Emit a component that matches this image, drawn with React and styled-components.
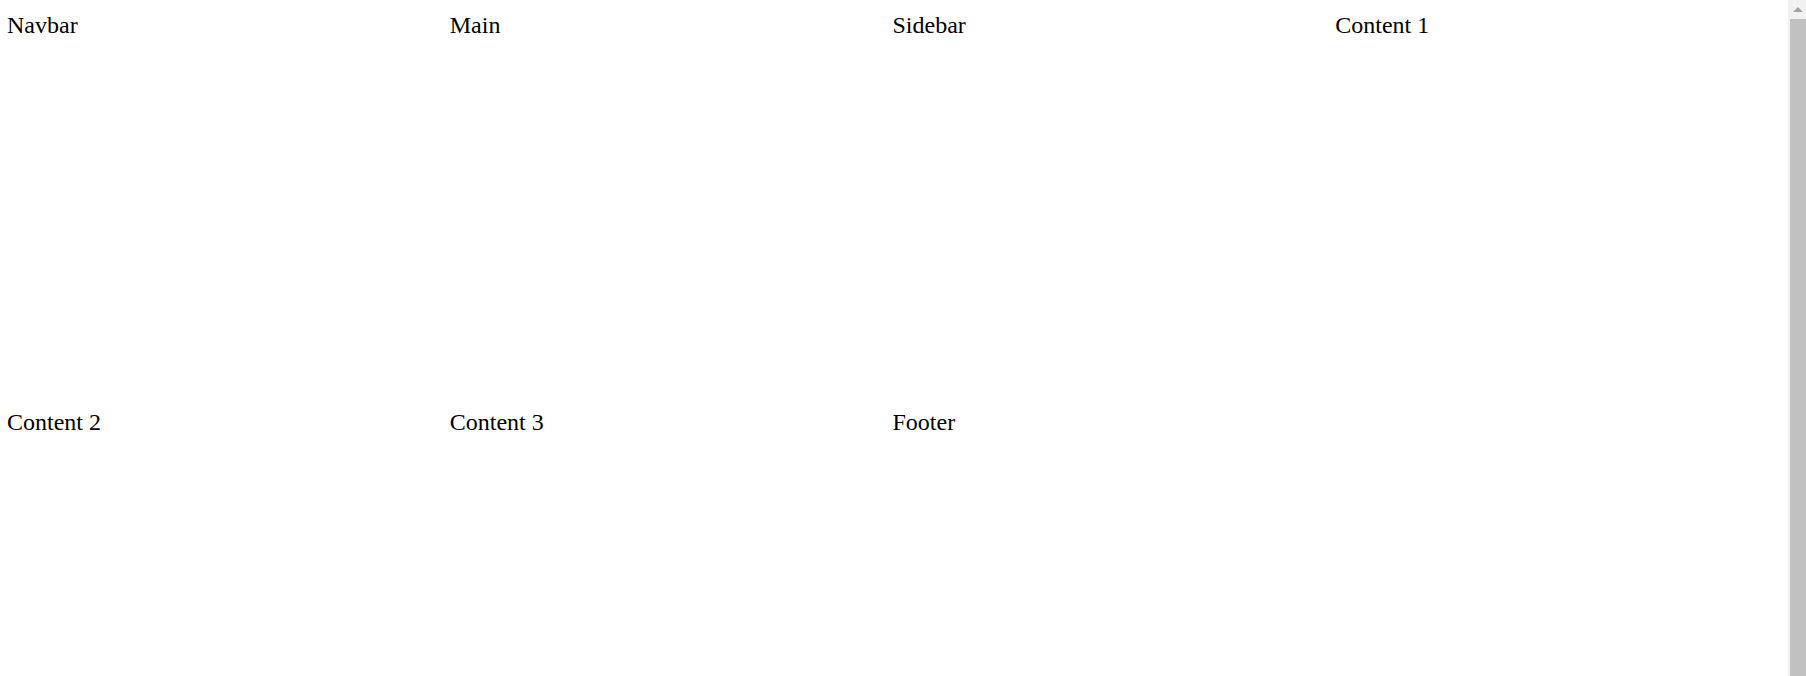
import React from "react";
import styled, { createGlobalStyle } from "styled-components";

const GlobalStyle = createGlobalStyle`
    html {
        overflow: hidden;
    }
    body {
        margin: 8px 28px 8px 7px;
        font-family: "Liberation Serif", "Times New Roman", serif;
        background: #fff;
        color: #000;
    }
`;

const Grid = styled.div`
    display: grid;
    grid-template-columns: repeat(4, 1fr);
    grid-auto-rows: 397px;
`;

const Cell = styled.div`
    font-size: 24px;
    padding-top: 4px;
`;

// fake browser scrollbar, drawn over the right edge
const Scrollbar = styled.div`
    position: fixed;
    top: 0;
    right: 0;
    bottom: 0;
    width: 18px;
    background: #f1f1f1;
    display: flex;
    flex-direction: column;
    align-items: flex-end;
`;

const ArrowUp = styled.div`
    height: 19px;
    width: 100%;
    display: flex;
    align-items: center;
    justify-content: center;
    padding-left: 2px;
    box-sizing: border-box;
`;

const Thumb = styled.div`
    flex: 1;
    width: 16px;
    background: #c1c1c1;
`;

const items = ["Navbar", "Main", "Sidebar", "Content 1", "Content 2", "Content 3", "Footer"];

const App = () => {
    return (
        <>
            <GlobalStyle />
            <Grid>
                {items.map((item) => (
                    <Cell key={item}>{item}</Cell>
                ))}
            </Grid>
            <Scrollbar>
                <ArrowUp>
                    <svg width="10" height="6" viewBox="0 0 10 6">
                        <path d="M5 0 L10 5 L0 5 Z" fill="#a3a3a3" />
                    </svg>
                </ArrowUp>
                <Thumb />
            </Scrollbar>
        </>
    );
};

export default App;
